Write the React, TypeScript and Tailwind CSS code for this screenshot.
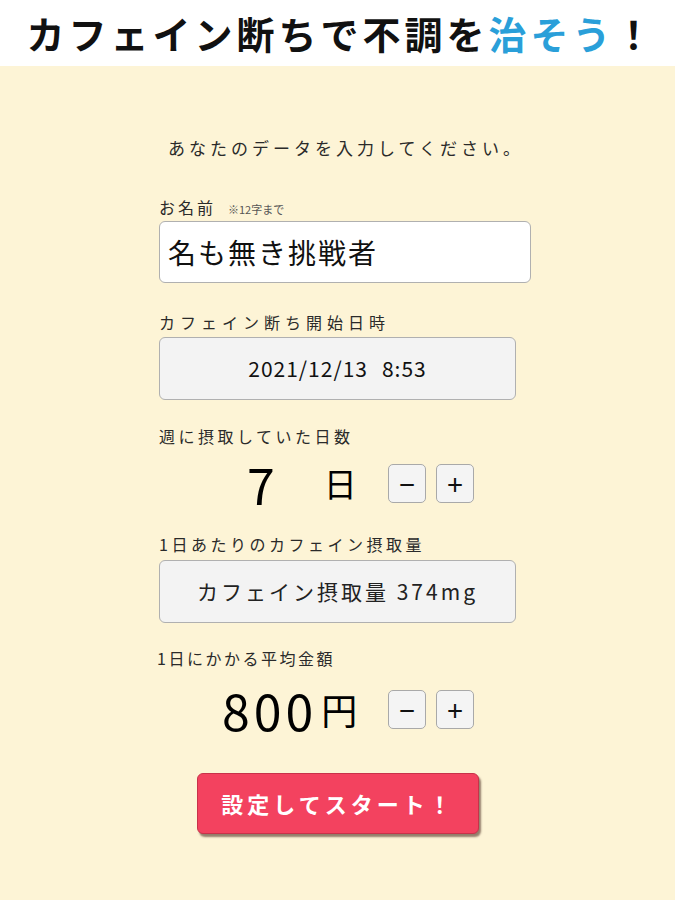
import type { ReactNode } from "react";

const jp = "font-['Noto_Sans_CJK_JP','Noto_Sans',sans-serif]";

function Label({ children, className = "" }: { children: ReactNode; className?: string }) {
  return (
    <div className={`h-[22px] leading-[22px] text-[16px] text-[#2a2a2a] whitespace-nowrap ${className}`}>
      {children}
    </div>
  );
}

function StepButton({ children }: { children: ReactNode }) {
  return (
    <button
      type="button"
      className="w-[38px] h-[39px] rounded-[5px] border border-[#a9a9a9] bg-[#f4f4f4] text-[28px] leading-none text-[#111] flex items-center justify-center"
    >
      {children}
    </button>
  );
}

function Stepper({ value, unit, valueClass, unitClass }: { value: string; unit: string; valueClass: string; unitClass: string }) {
  return (
    <div className="flex items-center h-[50px]">
      <div className="w-[229px] flex items-center">
        <span className={`text-black leading-none ${valueClass}`}>{value}</span>
        <span className={`text-black leading-none ${unitClass}`}>{unit}</span>
      </div>
      <div className="flex gap-[10px]">
        <StepButton>−</StepButton>
        <StepButton>+</StepButton>
      </div>
    </div>
  );
}

export default function App() {
  return (
    <div className={`w-[675px] h-[900px] flex flex-col bg-[#fdf4d6] ${jp}`}>
      <header className="h-[66px] bg-white flex items-center justify-center pl-[8px]">
        <h1 className="text-[38px] font-bold tracking-[4px] text-[#111] leading-none">
          カフェイン断ちで不調を<span className="text-[#2a9fd9]">治そう</span>！
        </h1>
      </header>

      <main className="flex-1 pl-[159px]">
        <p className="mt-[70px] ml-[9px] h-[24px] leading-[24px] text-[17px] tracking-[4px] text-[#2a2a2a]">
          あなたのデータを入力してください。
        </p>

        <Label className="mt-[36px] flex items-end tracking-[3px]">
          お名前
          <span className="ml-[12px] text-[11px] tracking-normal text-[#555] leading-[18px]">※12字まで</span>
        </Label>
        <div className="mt-[3px] w-[372px] h-[62px] rounded-[6px] border border-[#b0b0b0] bg-white flex items-center pl-[8px] text-[28px] tracking-[2px] text-[#111]">
          名も無き挑戦者
        </div>

        <Label className="mt-[28px] tracking-[5px]">カフェイン断ち開始日時</Label>
        <div className="mt-[4px] w-[357px] h-[63px] rounded-[6px] border border-[#b0b0b0] bg-[#f3f3f3] flex items-center justify-center gap-[14px] text-[21px] tracking-[1px] text-[#111]">
          <span>2021/12/13</span>
          <span>8:53</span>
        </div>

        <Label className="mt-[25px] tracking-[3.5px]">週に摂取していた日数</Label>
        <div className="mt-[11px]">
          <Stepper value="7" unit="日" valueClass="ml-[88px] text-[50px]" unitClass="ml-[49px] text-[33px]" />
        </div>

        <Label className="mt-[25px] tracking-[3.5px]">1日あたりのカフェイン摂取量</Label>
        <div className="mt-[5px] w-[357px] h-[63px] rounded-[6px] border border-[#b0b0b0] bg-[#f3f3f3] flex items-center justify-center text-[21px] tracking-[3px] text-[#222]">
          カフェイン摂取量 374mg
        </div>

        <Label className="mt-[24px] -ml-[2px] tracking-[2.5px]">1日にかかる平均金額</Label>
        <div className="mt-[15px]">
          <Stepper value="800" unit="円" valueClass="ml-[63px] text-[50px] tracking-[4px]" unitClass="ml-[4px] text-[36px]" />
        </div>

        <button
          type="button"
          className="mt-[39px] ml-[38px] w-[282px] h-[61px] rounded-[6px] bg-[#f3425f] border border-[#c8324a] shadow-[2px_3px_2px_rgba(60,30,20,0.55)] text-white font-bold text-[22px] tracking-[4px] flex items-center justify-center"
        >
          設定してスタート！
        </button>
      </main>
    </div>
  );
}
